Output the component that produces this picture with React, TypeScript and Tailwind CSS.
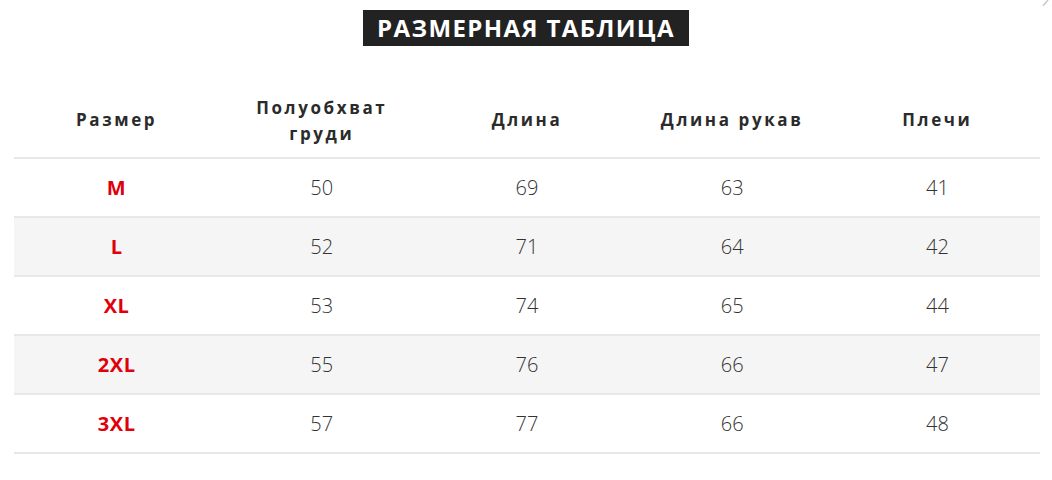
import React from "react";

const headers = ["Размер", "Полуобхват груди", "Длина", "Длина рукав", "Плечи"];
const rows: [string, string, string, string, string][] = [
  ["M", "50", "69", "63", "41"],
  ["L", "52", "71", "64", "42"],
  ["XL", "53", "74", "65", "44"],
  ["2XL", "55", "76", "66", "47"],
  ["3XL", "57", "77", "66", "48"],
];

export default function App() {
  return (
    <div
      className="relative w-[1052px] h-[480px] bg-white overflow-hidden"
      style={{ fontFamily: '"Open Sans", "Noto Sans", sans-serif' }}
    >
      <svg className="absolute right-[2px] top-0" width="8" height="6" viewBox="0 0 8 6">
        <line x1="1" y1="6" x2="6" y2="0" stroke="#c8c8c8" strokeWidth="1.5" />
      </svg>
      <div className="flex justify-center pt-[10px]">
        <div className="bg-[#222222] h-[36px] w-[326px] flex items-center justify-center">
          <span className="text-white font-bold text-[24px] tracking-[1.4px] leading-none">
            РАЗМЕРНАЯ ТАБЛИЦА
          </span>
        </div>
      </div>
      <div className="ml-[14px] w-[1026px] mt-[36px]">
        <div className="grid grid-cols-5 h-[77px] border-b-2 border-[#e8e8e8] items-center">
          {headers.map((h, i) => (
            <div
              key={i}
              className={`text-center font-bold text-[17px] leading-[26px] tracking-[2.6px] text-[#2b2b2b] mx-auto ${i === 1 ? "w-[150px] pt-[2px]" : ""}`}
            >
              {h}
            </div>
          ))}
        </div>
        {rows.map((r, ri) => (
          <div
            key={ri}
            className={`grid grid-cols-5 h-[59px] border-b-2 border-[#e8e8e8] items-center ${ri % 2 === 1 ? "bg-[#f5f5f5]" : "bg-white"}`}
          >
            {r.map((c, ci) =>
              ci === 0 ? (
                <div key={ci} className="text-center font-bold text-[20px] tracking-[0.6px] text-[#e0000b]">
                  {c}
                </div>
              ) : (
                <div key={ci} className="text-center font-light text-[20px] text-[#333333]">
                  {c}
                </div>
              )
            )}
          </div>
        ))}
      </div>
    </div>
  );
}
